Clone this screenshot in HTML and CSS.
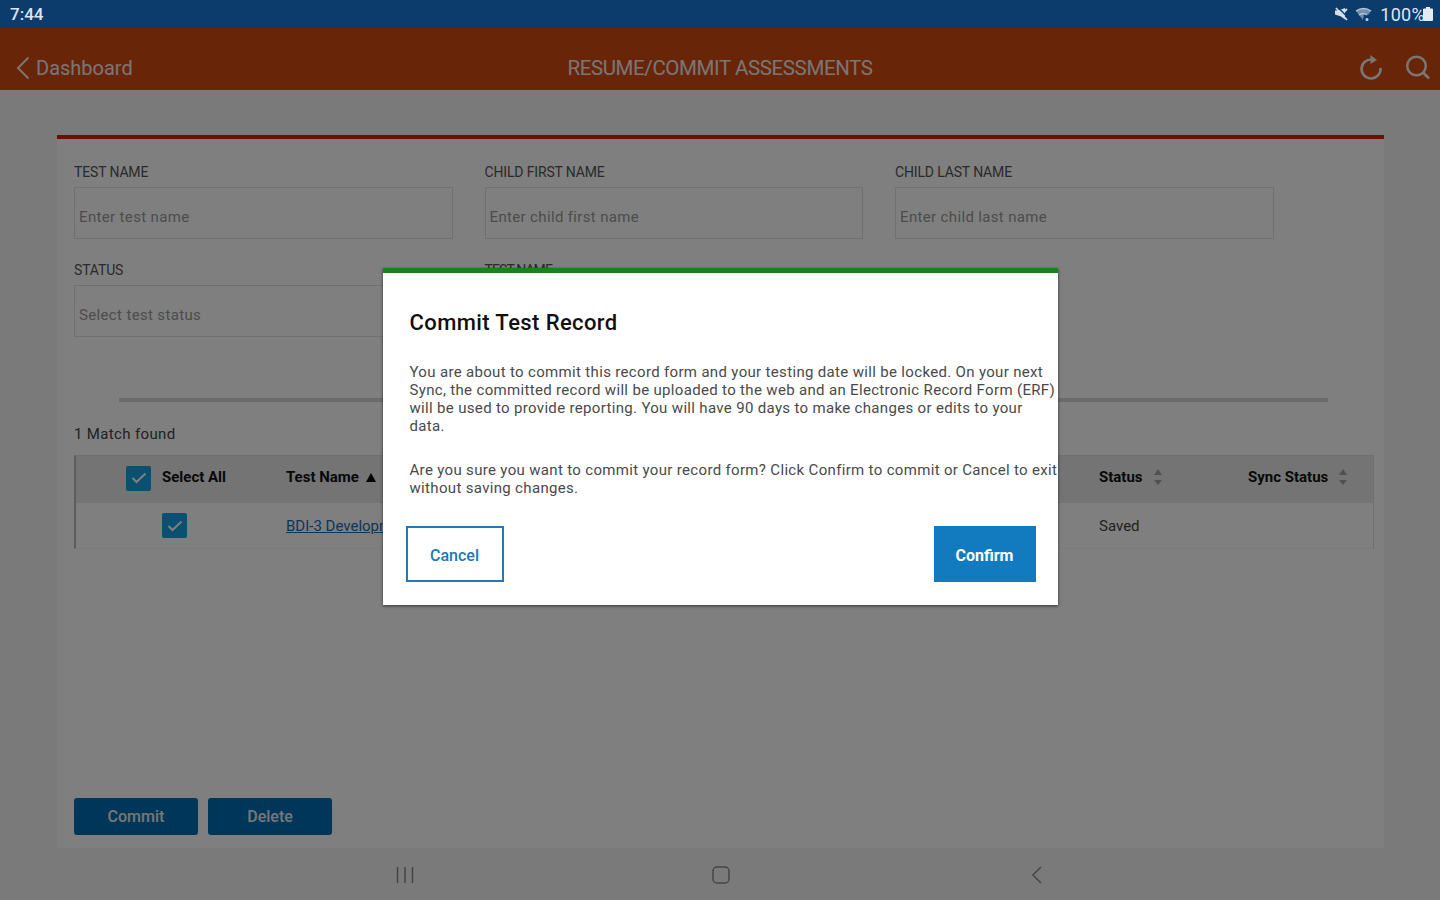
FILE: index.html
```html
<!DOCTYPE html>
<html lang="en">
<head>
    <meta charset="UTF-8">
    <meta name="viewport" content="width=device-width, initial-scale=1.0">
    <title>Resume/Commit Assessments</title>
    <link rel="stylesheet" href="styles.css">
</head>
<body>
    <div class="status-bar">
        <span class="clock">7:44</span>
        <div class="status-icons">
            <svg width="14" height="16" viewBox="0 0 14 16">
                <path d="M1 4.500h3.500L11 2v11.500L7 10.500l-6-2z" fill="#d5e0ec"/>
                <path d="M2 2l11 12M13 3L9 7" stroke="#d5e0ec" stroke-width="1.800"/>
                <path d="M4 1.500l9 9" stroke="#0c3c6c" stroke-width="1.200"/>
            </svg>
            <svg class="wifi" width="17" height="15" viewBox="0 0 17 15">
                <path d="M1 4q7.500-5 15 0l-3 4-1.500-1-2.500 0-1 6L1 4z" fill="#6f8fb0"/>
                <path d="M1 4q7.500-5 15 0M4 8q4-3 8 0" fill="none" stroke="#b5c7da" stroke-width="1.500"/>
                <circle cx="12" cy="12.500" r="1.500" fill="#c5d3e2"/>
            </svg>
            <span class="percent">100%</span>
            <svg class="battery" width="10" height="14" viewBox="0 0 10 14">
                <path d="M3 0h4v1.500h2q1 0 1 1V13q0 1-1 1H1q-1 0-1-1V2.500q0-1 1-1h2z" fill="#e4ebf3"/>
            </svg>
        </div>
    </div>

    <div class="app">
        <header class="navbar">
            <div class="back">
                <svg width="14" height="24" viewBox="0 0 14 24">
                    <path d="M12.500 1.500L2 12l10.500 10.500" fill="none" stroke="currentColor" stroke-width="2"/>
                </svg>
                <span class="back-label">Dashboard</span>
            </div>
            <h1>RESUME/COMMIT ASSESSMENTS</h1>
            <div class="nav-icons">
                <svg width="24" height="26" viewBox="0 0 24 26">
                    <path d="M13 4.500A9.500 9.500 0 1 0 21.500 13" fill="none" stroke="currentColor" stroke-width="2.600"/>
                    <path d="M11.500 0l6.500 5-6.500 4z" fill="currentColor"/>
                </svg>
                <svg width="25" height="26" viewBox="0 0 25 26">
                    <circle cx="11.500" cy="11" r="9.300" fill="none" stroke="currentColor" stroke-width="2.500"/>
                    <path d="M18 17.500l6 6" stroke="currentColor" stroke-width="2.800"/>
                </svg>
            </div>
        </header>

        <main class="card">
            <div class="filters">
                <div class="field">
                    <label>TEST NAME</label>
                    <div class="input">Enter test name</div>
                </div>
                <div class="field">
                    <label>CHILD FIRST NAME</label>
                    <div class="input">Enter child first name</div>
                </div>
                <div class="field">
                    <label>CHILD LAST NAME</label>
                    <div class="input">Enter child last name</div>
                </div>
                <div class="field">
                    <label>STATUS</label>
                    <div class="input">Select test status</div>
                </div>
                <div class="field">
                    <label class="narrow">TEST NAME</label>
                </div>
            </div>
            <div class="divider"></div>
            <p class="matches">1 Match found</p>
            <div class="table">
                <div class="row head">
                    <div class="cell select-all">
                        <span class="checkbox"><svg width="16" height="12" viewBox="0 0 16 12"><path d="M1.500 6l4 4 9-8.500"/></svg></span>
                        Select All
                    </div>
                    <div class="cell">Test Name <svg class="sorted" width="10" height="9" viewBox="0 0 10 9"><path d="M5 0l5 9H0z"/></svg></div>
                    <div class="cell">Status
                        <svg class="sort" width="10" height="18" viewBox="0 0 10 18"><path d="M1 7L5 1l4 6zM1 12l4 5 4-5z"/></svg>
                    </div>
                    <div class="cell">Sync Status
                        <svg class="sort" width="10" height="18" viewBox="0 0 10 18"><path d="M1 7L5 1l4 6zM1 12l4 5 4-5z"/></svg>
                    </div>
                </div>
                <div class="row">
                    <div class="cell select-one">
                        <span class="checkbox"><svg width="16" height="12" viewBox="0 0 16 12"><path d="M1.500 6l4 4 9-8.500"/></svg></span>
                    </div>
                    <div class="cell"><a class="record">BDI-3 Developmental</a></div>
                    <div class="cell">Saved</div>
                    <div class="cell"></div>
                </div>
            </div>
            <div class="actions">
                <button>Commit</button>
                <button>Delete</button>
            </div>
        </main>

        <footer class="softkeys">
            <svg width="18" height="18" viewBox="0 0 18 18"><path d="M1.500 1v16M9 1v16M16.500 1v16"/></svg>
            <svg width="18" height="18" viewBox="0 0 18 18"><rect x="1" y="1" width="16" height="16" rx="4"/></svg>
            <svg width="18" height="18" viewBox="0 0 18 18"><path d="M13 1L5 9l8 8"/></svg>
        </footer>
    </div>

    <div class="overlay">
        <div class="modal">
            <h2>Commit Test Record</h2>
            <p class="about">You are about to commit this record form and your testing date will be locked. On your next<br>
                Sync, the committed record will be uploaded to the web and an Electronic Record Form (ERF)<br>
                will be used to provide reporting. You will have 90 days to make changes or edits to your<br>
                data.</p>
            <p>Are you sure you want to commit your record form? Click Confirm to commit or Cancel to exit<br>
                without saving changes.</p>
            <div class="modal-buttons">
                <button class="cancel">Cancel</button>
                <button class="confirm">Confirm</button>
            </div>
        </div>
    </div>
</body>
</html>
```
FILE: styles.css
```css
* {
    box-sizing: border-box;
}
body {
    margin: 0;
    height: 900px;
    overflow: hidden;
    font-family: Roboto, sans-serif;
    background-color: #f4f4f4;
    display: flex;
    flex-direction: column;
}
svg {
    display: block;
    flex: none;
}
h1, h2, p {
    margin: 0;
}
button {
    font-family: inherit;
    padding: 0;
    border: none;
}

/* Status bar */
.status-bar {
    height: 28px;
    flex: none;
    background-color: #0c3c6c;
    color: #dde6f0;
    display: flex;
    align-items: center;
    justify-content: space-between;
    padding: 0 7px 0 10px;
    font-size: 17px;
    position: relative;
    z-index: 20;
}
.clock {
    font-weight: 500;
}
.status-icons {
    display: flex;
    align-items: center;
}
.wifi {
    margin: 0 8px 0 7px;
}
.percent {
    font-size: 18px;
    letter-spacing: 0.3px;
}
.battery {
    margin-left: -2px;
}

.app {
    flex: 1;
    display: flex;
    flex-direction: column;
}
.navbar {
    height: 62px;
    flex: none;
    background-color: #d04a10;
    color: #f4ece8;
    display: grid;
    grid-template-columns: 1fr auto 1fr;
    align-items: center;
    padding: 17px 10px 0;
}
.back {
    display: flex;
    align-items: center;
    gap: 6px;
    padding-left: 6px;
    font-size: 20px;
}
.navbar h1 {
    font-size: 20.5px;
    font-weight: 400;
    letter-spacing: -0.4px;
}
.nav-icons {
    display: flex;
    justify-content: flex-end;
    gap: 22px;
}

/* Search card */
.card {
    margin: 45px 56px 0 57px;
    height: 713px;
    background-color: #fff;
    border-top: 4px solid #cc2510;
    padding: 24px 10px 0 17px;
    display: flex;
    flex-direction: column;
}
.filters {
    display: grid;
    grid-template-columns: repeat(3, 378.5px);
    grid-auto-rows: 98px;
    column-gap: 32px;
}
.field label {
    display: block;
    height: 24px;
    line-height: 18px;
    font-size: 14px;
    letter-spacing: -0.15px;
    color: #555;
}
.field .narrow {
    letter-spacing: -0.9px;
}
.input {
    height: 52px;
    border: 1px solid #e0e0e0;
    padding: 20px 4px 0;
    font-size: 15px;
    line-height: 18px;
    letter-spacing: 0.35px;
    color: #999;
}
.divider {
    height: 4px;
    flex: none;
    background-color: #d6d6d6;
    margin: 39px 46px 0 45px;
}
.matches {
    font-size: 15px;
    line-height: 20px;
    letter-spacing: 0.35px;
    margin-top: 22px;
    color: #444;
}
.table {
    margin-top: 11px;
    border: 1px solid #ddd;
    border-left: 2px solid #bbb;
    border-bottom-color: #f4f4f4;
    font-size: 15px;
    color: #444;
}
.row {
    height: 45px;
    display: grid;
    grid-template-columns: 210px 813px 149px 1fr;
    align-items: center;
}
.row.head {
    height: 47px;
    padding-bottom: 5px;
    background-color: #e8e8e8;
    font-weight: 700;
    color: #111;
}
.cell {
    display: flex;
    align-items: center;
}
.select-all {
    padding-left: 50px;
    gap: 11px;
}
.select-all .checkbox {
    position: relative;
    top: 1px;
}
.select-one {
    padding-left: 86px;
}
.checkbox {
    width: 25px;
    height: 25px;
    border-radius: 2px;
    background-color: #14a0e0;
    display: flex;
    align-items: center;
    justify-content: center;
}
.checkbox path {
    fill: none;
    stroke: #fff;
    stroke-width: 2;
}
.sorted {
    margin-left: 7px;
}
.sort {
    margin-left: 10px;
    fill: #a0a0a0;
}
.record {
    color: #1a6cb5;
    text-decoration: underline;
}
.actions {
    margin: auto 0 13px;
    display: flex;
    gap: 10px;
}
.actions button {
    width: 124px;
    height: 37px;
    border-radius: 3px;
    background-color: #006cb4;
    color: #eee;
    font-size: 16px;
    font-weight: 500;
}

.softkeys {
    flex: 1;
    display: flex;
    justify-content: space-between;
    align-items: center;
    padding: 2px 394px 0 396px;
}
.softkeys svg {
    fill: none;
    stroke: #8a8a8a;
    stroke-width: 1.5;
}

/* Confirm dialog */
.overlay {
    position: absolute;
    inset: 0;
    background-color: rgba(0, 0, 0, 0.5);
    display: flex;
    justify-content: center;
    align-items: flex-start;
    padding-top: 268px;
}
.modal {
    width: 675px;
    height: 337px;
    background-color: #fff;
    border-top: 5px solid #1c801c;
    box-shadow: 0 1px 3px rgba(0, 0, 0, 0.6);
    padding: 36px 0 0 27px;
    white-space: nowrap;
}
.modal h2 {
    font-size: 22px;
    line-height: 28px;
    font-weight: 500;
    letter-spacing: 0.4px;
    color: #111;
}
.modal p {
    font-size: 15px;
    line-height: 18px;
    letter-spacing: 0.33px;
    color: #4a4a4a;
}
.modal .about {
    margin: 26px 0;
}
.modal-buttons {
    display: flex;
    justify-content: space-between;
    margin: 29px 22px 0 -4px;
}
.modal-buttons button {
    height: 56px;
    padding-top: 2px;
    font-size: 16px;
}
.modal-buttons .cancel {
    width: 98px;
    border: 2px solid #2479b4;
    background-color: #fff;
    color: #1a78b8;
    font-weight: 500;
}
.modal-buttons .confirm {
    width: 102px;
    background-color: #127abf;
    color: #fff;
    font-weight: 700;
}
```
